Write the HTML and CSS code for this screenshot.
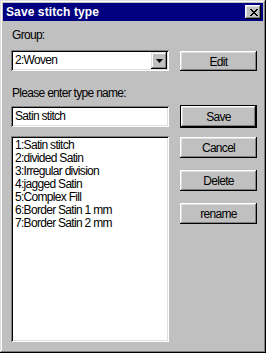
FILE: index.html
```html
<!DOCTYPE html>
<html>
<head>
<meta charset="utf-8">
<link rel="stylesheet" href="styles.css">
</head>
<body>
<div class="window">
  <div class="titlebar">
    <span class="title">Save stitch type</span>
    <div class="close">
      <svg width="8" height="7" viewBox="0 0 8 7"><path d="M0 0h2v1h1v1h2v-1h1v-1h2v1h-1v1h-1v1h-1v1h1v1h1v1h1v1h-2v-1h-1v-1h-2v1h-1v1h-2v-1h1v-1h1v-1h1v-1h-1v-1h-1v-1h-1z" fill="#000"/></svg>
    </div>
  </div>
  <div class="body">
    <div class="label first">Group:</div>
    <div class="row">
      <div class="sunken combo">
        <span class="value">2:Woven</span>
        <div class="drop">
          <svg width="7" height="4" viewBox="0 0 7 4"><path d="M0 0h7l-3.5 4z" fill="#000"/></svg>
        </div>
      </div>
      <div class="btn edit">Edit</div>
    </div>
    <div class="label second">Please enter type name:</div>
    <div class="row">
      <div class="sunken field">Satin stitch</div>
      <div class="btn default">Save</div>
    </div>
    <div class="row main">
      <div class="sunken list">
        <div class="item">1:Satin stitch</div>
        <div class="item">2:divided Satin</div>
        <div class="item">3:Irregular division</div>
        <div class="item">4:jagged Satin</div>
        <div class="item">5:Complex Fill</div>
        <div class="item">6:Border Satin 1 mm</div>
        <div class="item">7:Border Satin 2 mm</div>
      </div>
      <div class="btncol">
        <div class="btn">Cancel</div>
        <div class="btn">Delete</div>
        <div class="btn">rename</div>
      </div>
    </div>
  </div>
</div>
</body>
</html>
```
FILE: styles.css
```css
html, body {
  margin: 0;
  padding: 0;
  background: #c0c0c0;
}
body {
  width: 266px;
  height: 353px;
  overflow: hidden;
  font-family: "Liberation Sans", Arial, sans-serif;
  font-size: 12px;
  letter-spacing: -0.7px;
  color: #000;
}
.window {
  width: 266px;
  height: 353px;
  box-sizing: border-box;
  padding: 3px;
  background: #c0c0c0;
  box-shadow: inset -1px -1px #000, inset 1px 1px #dfdfdf, inset -2px -2px #808080, inset 2px 2px #fff;
  display: flex;
  flex-direction: column;
}
.titlebar {
  height: 18px;
  background: #000080;
  display: flex;
  align-items: center;
  justify-content: space-between;
  padding: 0 2px 0 3px;
}
.title {
  color: #fff;
  font-weight: bold;
  font-size: 12px;
  letter-spacing: 0.1px;
}
.close {
  width: 16px;
  height: 14px;
  box-sizing: border-box;
  background: #c0c0c0;
  box-shadow: inset -1px -1px #000, inset 1px 1px #fff, inset -2px -2px #808080, inset 2px 2px #dfdfdf;
  display: flex;
  align-items: center;
  justify-content: center;
  padding-left: 1px;
}
.body {
  padding: 0 6px 0 8px;
  display: flex;
  flex-direction: column;
}
.label {
  height: 13px;
  line-height: 13px;
  padding-left: 1px;
}
.label.first { margin-top: 8px; margin-bottom: 8px; }
.label.second { margin-top: 16px; margin-bottom: 5px; }
.row {
  display: flex;
  align-items: center;
  gap: 11px;
}
.sunken {
  background: #fff;
  box-sizing: border-box;
  box-shadow: inset 1px 1px #808080, inset -1px -1px #fff, inset 2px 2px #000, inset -2px -2px #dfdfdf;
}
.combo {
  width: 158px;
  height: 21px;
  display: flex;
  align-items: center;
  justify-content: space-between;
  padding: 2px;
}
.combo .value {
  padding-left: 2px;
  line-height: 13px;
}
.drop {
  width: 16px;
  height: 17px;
  box-sizing: border-box;
  background: #c0c0c0;
  box-shadow: inset -1px -1px #000, inset 1px 1px #dfdfdf, inset -2px -2px #808080, inset 2px 2px #fff;
  display: flex;
  align-items: center;
  justify-content: center;
  padding-top: 1px;
}
.field {
  width: 158px;
  height: 21px;
  line-height: 21px;
  padding-left: 4px;
}
.btn {
  width: 77px;
  height: 21px;
  box-sizing: border-box;
  background: #c0c0c0;
  box-shadow: inset -1px -1px #000, inset 1px 1px #fff, inset -2px -2px #808080, inset 2px 2px #dfdfdf;
  display: flex;
  align-items: center;
  justify-content: center;
  padding-top: 1px;
}
.btn.edit { height: 20px; margin-top: 1px; }
.btn.default {
  height: 23px;
  box-shadow: inset 0 0 0 1px #000, inset -2px -2px #000, inset 2px 2px #fff, inset -3px -3px #808080, inset 3px 3px #dfdfdf;
}
.row.main {
  margin-top: 8px;
  align-items: flex-start;
}
.list {
  width: 158px;
  height: 206px;
  padding: 3px 4px;
}
.item {
  height: 13px;
  line-height: 13px;
}
.btncol {
  display: flex;
  flex-direction: column;
  gap: 12px;
  padding-top: 1px;
}
```
